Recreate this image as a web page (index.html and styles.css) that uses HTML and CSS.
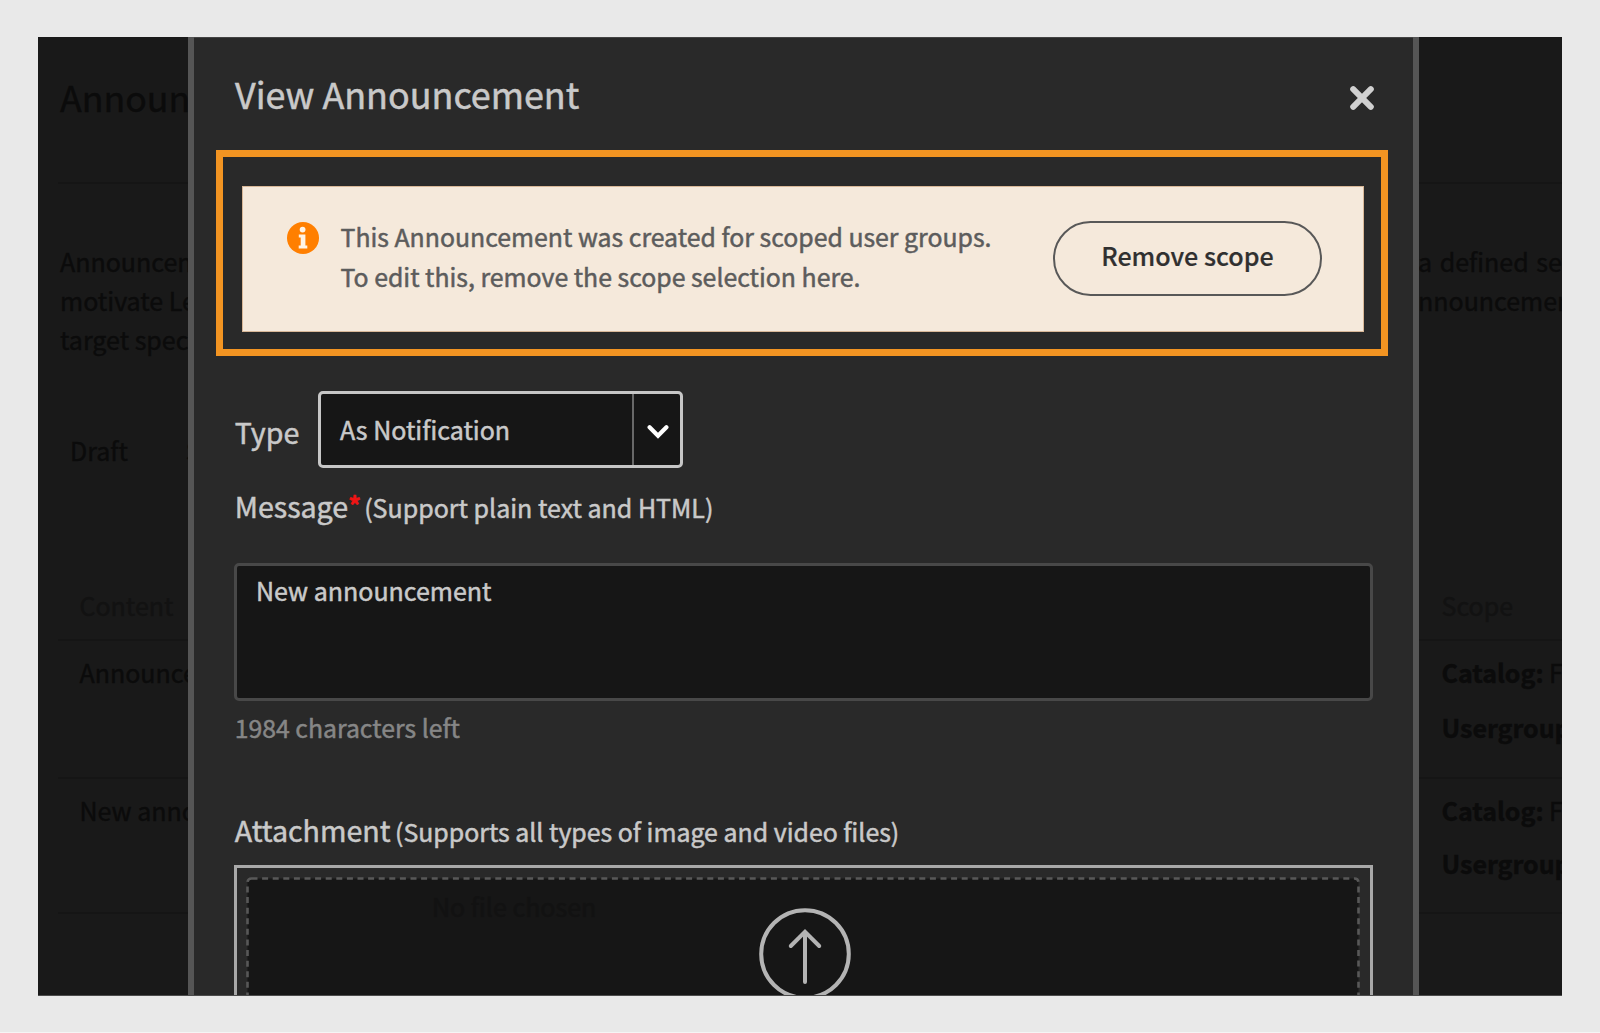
FILE: index.html
```html
<!DOCTYPE html>
<html lang="en">
<head>
<meta charset="utf-8">
<title>View Announcement</title>
<link rel="stylesheet" href="styles.css">
</head>
<body>
<main class="frame">
  <section class="page">
    <h1 class="page-title">Announ</h1>
    <div class="intro">
      <div class="intro-start">Announcem<br>motivate Le<br>target spec</div>
      <div class="intro-end"><span class="wide">a defined set</span><br>nnouncemen</div>
    </div>
    <div class="tabs"><span>Draft</span><span>S</span></div>
    <div class="row row-head"><div>Content</div><div>Scope</div></div>
    <div class="row row-first"><div>Announce</div><div><b>Catalog:</b> F<br><b>Usergroup</b></div></div>
    <div class="row row-second"><div>New anno</div><div><b>Catalog:</b> F<br><b>Usergroup</b></div></div>
  </section>

  <section class="modal">
    <header class="modal-head">
      <h2 class="modal-title">View Announcement</h2>
      <svg class="close" viewBox="0 0 26 26"><path d="M4.2 4.2 21.8 21.8M21.8 4.2 4.2 21.8"/></svg>
    </header>

    <div class="highlight">
      <div class="notice">
        <svg class="info" viewBox="0 0 32 32"><circle cx="16" cy="16" r="16" fill="#ff7f00"/><circle cx="15.6" cy="7.6" r="2.9" fill="#fff4e6"/><path fill="#fff4e6" d="M11.8 12.6h6.6v11h1.9v3h-8.6v-3h2v-8h-1.9z"/></svg>
        <p class="notice-text">This Announcement was created for scoped user groups.<br>To edit this, remove the scope selection here.</p>
        <button class="remove">Remove scope</button>
      </div>
    </div>

    <div class="form">
      <div class="type-row">
        <label class="label type-label">Type</label>
        <div class="select">
          <span class="select-value">As Notification</span>
          <span class="select-arrow"><svg viewBox="0 0 22 16"><path d="M2.6 3.2 11 11.8 19.4 3.2"/></svg></span>
        </div>
      </div>
      <div class="field-line message-line"><span class="label">Message</span><span class="required">*</span><span class="hint">(Support plain text and HTML)</span></div>
      <div class="textarea">New announcement</div>
      <div class="counter">1984 characters left</div>
      <div class="field-line attach-line"><span class="label">Attachment</span><span class="hint">(Supports all types of image and video files)</span></div>
      <div class="upload">
        <svg class="dashes" width="1116" height="200"><rect x="1.5" y="1.5" width="1111" height="300" rx="4"/></svg>
        <span class="no-file">No file chosen</span>
        <svg class="up" viewBox="0 0 92 92"><circle cx="46" cy="46" r="43.8"/><path d="M46 74V24M31.8 38 46 23.8 60.2 38"/></svg>
      </div>
    </div>
  </section>
</main>
</body>
</html>
```
FILE: styles.css
```css
* { box-sizing: border-box; }

body {
  margin: 0;
  height: 1033px;
  padding: 37px 38px;
  overflow: hidden;
  background: #e9e9e9;
  border-bottom: 1px solid #f5f5f5;
  font: 400 25px "Noto Sans CJK SC", "Noto Sans", sans-serif;
}

h1, h2, p { margin: 0; font-weight: 400; }

.frame {
  position: relative;
  width: 1524px;
  height: 959px;
  overflow: hidden;
  background: #191919;
  border-bottom: 1px solid #4c4c4c;
}

/* dimmed page behind the dialog */
.page {
  padding: 0 0 0 20px;
  color: #0b0b0b;
  -webkit-text-stroke: 0.4px;
}

.page-title {
  height: 146.5px;
  padding-top: 30px;
  padding-left: 2px;
  border-bottom: 2px solid #151515;
  font-size: 35.7px;
  line-height: 60px;
}

.intro {
  display: grid;
  grid-template-columns: 1361px 1fr;
  height: 214px;
  padding-top: 58.5px;
  line-height: 39px;
  white-space: nowrap;
}

.intro-start { padding-left: 2px; }
.intro-end { margin-left: -1px; }
.wide { word-spacing: 2px; }

.tabs {
  display: flex;
  height: 142px;
  padding: 32px 0 0 12px;
  gap: 58px;
  line-height: 40px;
}

.row {
  display: grid;
  grid-template-columns: 1383.5px 1fr;
  border-bottom: 2px solid #151515;
  white-space: nowrap;
}
.row > div:first-child { padding-left: 21.5px; }
.row b { font-weight: 700; }

.row-head {
  height: 101px;
  padding-top: 45px;
  line-height: 40px;
  color: #121212;
}

.row-first { height: 138px; padding-top: 4.5px; line-height: 55px; }
.row-second { height: 135.5px; padding-top: 5.5px; line-height: 53px; }

/* dialog */
.modal {
  position: absolute;
  top: 0;
  left: 150px;
  width: 1231px;
  height: 980px;
  background: #292929;
  border: solid #555;
  border-width: 0 6px;
  box-shadow: inset 0 1px #444;
  color: #c9c9c9;
  -webkit-text-stroke: 0.5px;
}

.modal-head {
  display: flex;
  justify-content: space-between;
  align-items: center;
  height: 87px;
  padding: 26px 38px 0 41px;
}
.modal-title { margin-top: -2px; font-size: 35.9px; line-height: 60px; }

.close { width: 26px; height: 26px; margin-top: 8px; }
.close path { fill: none; stroke: #d0d0d0; stroke-width: 6; stroke-linecap: round; }

.highlight {
  height: 206px;
  margin: 26px 25px 0 22px;
  padding: 29px 17px 17px 19px;
  border: 7px solid #f29422;
}

.notice {
  display: flex;
  align-items: flex-start;
  height: 146px;
  padding: 29px 41px 0 44px;
  background: #f5e9db;
  border: 1px solid #d8b797;
  color: #5c5c5c;
}
.info { flex: none; width: 32px; height: 32px; margin-top: 6px; }
.notice-text { flex: 1; margin-left: 21.5px; font-size: 24.85px; line-height: 40px; white-space: nowrap; }

.remove {
  width: 269px;
  height: 75px;
  margin-top: 5px;
  padding: 0 0 7px;
  background: none;
  border: 2px solid #585858;
  border-radius: 38px;
  color: #303030;
  font: 500 25.1px "Noto Sans CJK SC", sans-serif;
  -webkit-text-stroke: 0.2px;
}

.form { padding: 35px 40px 0; }
.label { padding-left: 0.7px; font-size: 28.6px; }

.type-row { display: flex; align-items: center; height: 77px; }
.type-label { width: 84px; padding-top: 4px; line-height: 60px; }

.select {
  display: flex;
  width: 364.5px;
  height: 77px;
  background: #161616;
  border: 3px solid #c6c6c6;
  border-radius: 5px;
}
.select-value { flex: 1; padding-left: 19px; line-height: 71px; }
.select-arrow {
  display: flex;
  align-items: center;
  justify-content: center;
  width: 48px;
  padding-left: 2px;
  border-left: 2px solid #686868;
}
.select-arrow svg { width: 22px; height: 16px; margin-top: 5px; }
.select-arrow path { fill: none; stroke: #fff; stroke-width: 4.2; stroke-linecap: round; }

.field-line { height: 40px; line-height: 40px; white-space: nowrap; }
.message-line { display: flex; align-items: baseline; margin-top: 18px; }
.required { width: 16px; margin-bottom: 3px; transform: translateY(-3px); color: #f01414; font-weight: 700; font-size: 25px; }

.textarea {
  height: 138px;
  margin-top: 36.5px;
  padding: 6.5px 19px;
  margin-right: 0.5px;
  background: #161616;
  border: 3px solid #484848;
  border-radius: 5px;
  line-height: 36px;
}

.counter { margin-top: 8.5px; padding-left: 0.7px; font-size: 24.8px; line-height: 36px; color: #868686; }
.attach-line { display: flex; align-items: baseline; gap: 4px; margin-top: 65px; }
.attach-line .hint { margin-left: 0.5px; font-size: 24.9px; }

.upload {
  position: relative;
  display: flex;
  justify-content: center;
  height: 200px;
  margin-top: 15px;
  margin-right: 0.5px;
  padding-top: 40px;
  border: 3px solid #a8a8a8;
}
.dashes { position: absolute; top: 9px; left: 9px; }
.dashes rect { fill: #161616; stroke: #585858; stroke-width: 2.6; stroke-dasharray: 6 4.6; }
.no-file { position: absolute; top: 20px; left: 195px; color: #121212; }
.up { position: relative; width: 92px; height: 92px; left: 2px; }
.up circle, .up path { fill: none; stroke: #b4b4b4; stroke-width: 4; stroke-linecap: round; }
```
